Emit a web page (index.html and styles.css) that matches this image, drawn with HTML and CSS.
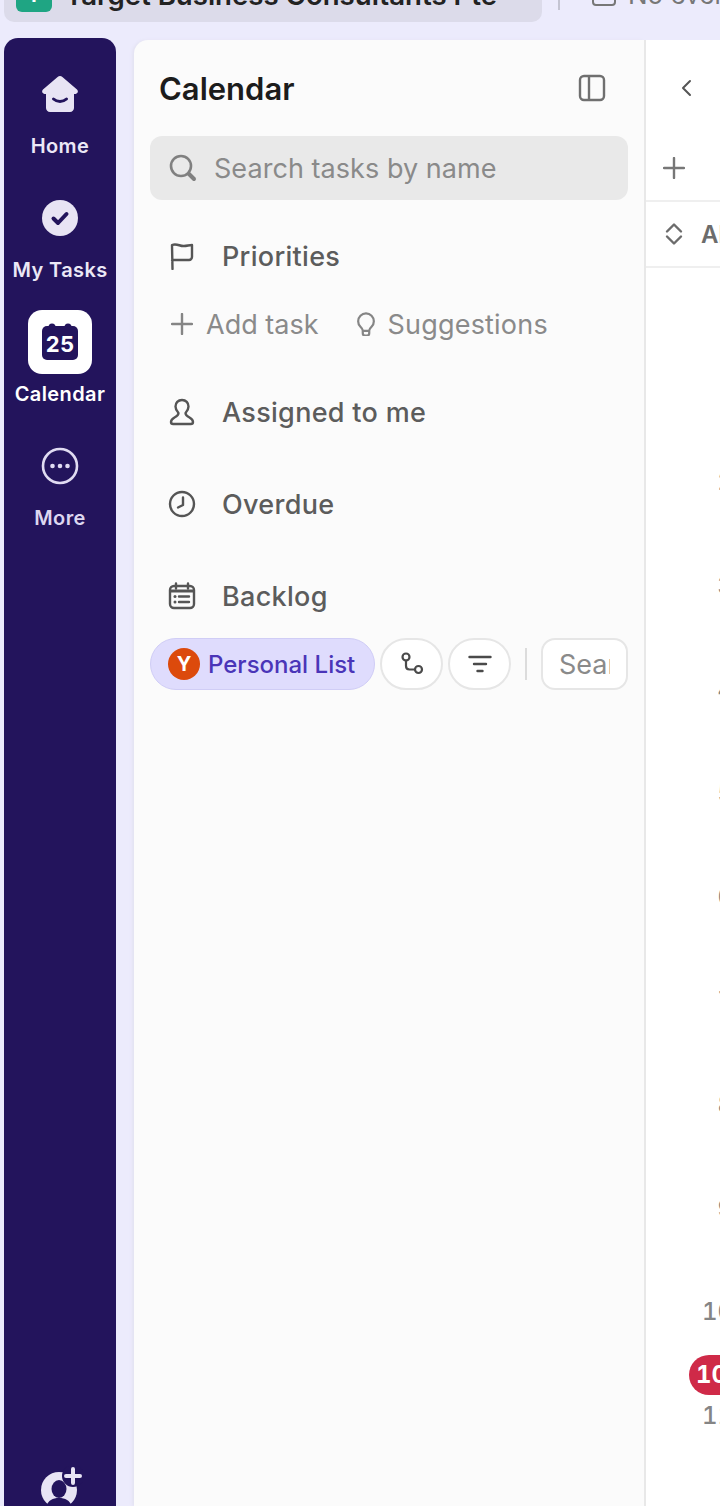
FILE: index.html
```html
<!DOCTYPE html>
<html lang="en">
<head>
    <meta charset="UTF-8">
    <title>Calendar</title>
    <link rel="stylesheet" href="styles.css">
</head>
<body>
    <div class="topbar">
        <div class="tab">
            <span class="tab-icon">T</span>
            <span class="tab-name">Target Business Consultants Pte</span>
        </div>
        <span class="top-divider"></span>
        <span class="event-icon"></span>
        <span class="event-text">No events</span>
    </div>

    <div class="app">
        <nav class="sidebar">
            <div class="nav-item">
                <div class="nav-icon">
                    <svg width="36" height="36" viewBox="0 0 36 36">
                        <path d="M15.6 1 1 13.4c-1.7 1.5-.8 4.3 1.400 4.600H4v14c0 2.200 1.800 4 4 4h20c2.200 0 4-1.800 4-4V18h1.600c2.200-.3 3.100-3.100 1.400-4.600L20.400 1c-1.400-1.200-3.400-1.200-4.800 0z" fill="#e8e4f4"/>
                        <path d="M11.500 23c3.500 3.200 9.500 3.200 13 0" fill="none" stroke="#23145c" stroke-width="3" stroke-linecap="round"/>
                    </svg>
                </div>
                <span>Home</span>
            </div>
            <div class="nav-item">
                <div class="nav-icon">
                    <svg width="36" height="36" viewBox="0 0 36 36">
                        <circle cx="18" cy="18" r="18" fill="#e8e4f4"/>
                        <path d="m11.500 18.500 4.500 4.500 8.500-9" fill="none" stroke="#23145c" stroke-width="4" stroke-linecap="round" stroke-linejoin="round"/>
                    </svg>
                </div>
                <span>My Tasks</span>
            </div>
            <div class="nav-item active">
                <div class="nav-icon">
                    <svg width="36" height="38" viewBox="0 0 36 38">
                        <circle cx="10" cy="4" r="3.500" fill="#23145c"/>
                        <circle cx="26" cy="4" r="3.500" fill="#23145c"/>
                        <rect x="0" y="3" width="36" height="34" rx="5" fill="#23145c"/>
                        <text x="18" y="29" class="cal-num" text-anchor="middle">25</text>
                    </svg>
                </div>
                <span>Calendar</span>
            </div>
            <div class="nav-item dim">
                <div class="nav-icon">
                    <svg width="38" height="38" viewBox="0 0 38 38">
                        <circle cx="19" cy="19" r="17" fill="none" stroke="#e0dbf2" stroke-width="2.600"/>
                        <circle cx="11.500" cy="19" r="2.300" fill="#e0dbf2"/>
                        <circle cx="19" cy="19" r="2.300" fill="#e0dbf2"/>
                        <circle cx="26.500" cy="19" r="2.300" fill="#e0dbf2"/>
                    </svg>
                </div>
                <span>More</span>
            </div>
            <div class="invite">
                <svg width="44" height="44" viewBox="0 0 44 44">
                    <circle cx="20" cy="24" r="18" fill="#e8e4f4"/>
                    <circle cx="34" cy="10" r="11" fill="#23145c"/>
                    <path d="M34 3v14M27 10h14" stroke="#e8e4f4" stroke-width="4" stroke-linecap="round"/>
                    <ellipse cx="20" cy="23" rx="7.500" ry="9" fill="#23145c"/>
                    <path d="M7 42c1-7 6-10 13-10s12 3 13 10z" fill="#23145c"/>
                </svg>
            </div>
        </nav>

        <aside class="panel">
            <div class="panel-head">
                <h2>Calendar</h2>
                <svg width="28" height="28" viewBox="0 0 28 28" fill="none" stroke="#6f6f6f" stroke-width="2.400">
                    <rect x="2" y="2" width="24" height="24" rx="4"/>
                    <path d="M11 2v24"/>
                </svg>
            </div>

            <div class="search">
                <svg width="30" height="30" viewBox="0 0 30 30" fill="none" stroke="#808080" stroke-width="2.600" stroke-linecap="round">
                    <circle cx="13" cy="13" r="10"/>
                    <path d="m21 21 5 5" stroke-width="4"/>
                </svg>
                <span>Search tasks by name</span>
            </div>

            <div class="task-row first">
                <svg width="28" height="28" viewBox="0 0 28 28" fill="none" stroke="#555" stroke-width="2.400" stroke-linecap="round" stroke-linejoin="round">
                    <path d="M4.500 27 4 3c5-2 8 1.500 12 1 3 0 5-1 8-1v12a3 3 0 0 1-3 3H4"/>
                </svg>
                <span>Priorities</span>
            </div>

            <div class="add-row">
                <span class="add-item">
                    <svg width="22" height="22" viewBox="0 0 22 22" stroke="#858585" stroke-width="2.400" stroke-linecap="round">
                        <path d="M11 1v20M1 11h20"/>
                    </svg>
                    Add task
                </span>
                <span class="add-item suggest">
                    <svg width="20" height="24" viewBox="0 -3 20 26" fill="none" stroke="#858585" stroke-width="2.400" stroke-linecap="round">
                        <path d="M6.500 17c0-1.500-1-2.500-2.500-4A8.500 8.500 0 1 1 16 13c-1.500 1.500-2.500 2.500-2.500 4v3a2.500 2.500 0 0 1-2.500 2.500H9A2.500 2.500 0 0 1 6.500 20z"/>
                        <path d="M7 17.500h6"/>
                    </svg>
                    Suggestions
                </span>
            </div>

            <div class="task-row">
                <svg width="26" height="28" viewBox="0 0 26 28" fill="none" stroke="#555" stroke-width="2.400" stroke-linejoin="round">
                    <path d="M13 2c-4 0-6.500 3-6.500 6.500 0 3 1.500 5 3 6.500 0 2-1 3-4 4.500C3 21 2 22.500 2 24c0 1.200 1 2 2.200 2h17.600c1.200 0 2.200-.8 2.200-2 0-1.500-1-3-3.500-4.500-3-1.500-4-2.500-4-4.500 1.500-1.500 3-3.500 3-6.500C19.500 5 17 2 13 2z"/>
                </svg>
                <span>Assigned to me</span>
            </div>
            <div class="task-row">
                <svg width="28" height="28" viewBox="0 0 28 28" fill="none" stroke="#555" stroke-width="2.400" stroke-linecap="round" stroke-linejoin="round">
                    <circle cx="14" cy="14" r="12"/>
                    <path d="M15 7.500V15l-5 2.500"/>
                </svg>
                <span>Overdue</span>
            </div>
            <div class="task-row">
                <svg width="28" height="28" viewBox="0 0 28 28">
                    <rect x="2" y="4" width="24" height="22" rx="4" fill="none" stroke="#555" stroke-width="2.400"/>
                    <path d="M2 9h24" stroke="#555" stroke-width="3"/>
                    <path d="M8 1.500v5M20 1.500v5" stroke="#555" stroke-width="2.400" stroke-linecap="round"/>
                    <path d="M11 14.500h10M11 20h10" stroke="#555" stroke-width="2.400" stroke-linecap="round"/>
                    <circle cx="7" cy="14.500" r="1.500" fill="#555"/>
                    <circle cx="7" cy="20" r="1.500" fill="#555"/>
                </svg>
                <span>Backlog</span>
            </div>

            <div class="chips">
                <div class="chip-list">
                    <span class="avatar">Y</span>
                    <span>Personal List</span>
                </div>
                <div class="chip-btn">
                    <svg width="24" height="24" viewBox="0 0 24 24" fill="none" stroke="#4a4a4a" stroke-width="2.200" stroke-linecap="round">
                        <circle cx="6" cy="5" r="3.500"/>
                        <circle cx="18.500" cy="17.500" r="3.500"/>
                        <path d="M6 8.500V14c0 2 1 3.500 3.500 3.500H15"/>
                    </svg>
                </div>
                <div class="chip-btn">
                    <svg width="24" height="18" viewBox="0 0 24 18" stroke="#4a4a4a" stroke-width="2.400" stroke-linecap="round">
                        <path d="M1.500 2h21M6 9h12M9.500 16h5"/>
                    </svg>
                </div>
                <span class="chip-divider"></span>
                <div class="chip-search"><span>Search</span></div>
            </div>
        </aside>

        <main class="main">
            <div class="bar bar-nav">
                <svg width="12" height="18" viewBox="0 0 12 18" fill="none" stroke="#555" stroke-width="2" stroke-linecap="round" stroke-linejoin="round">
                    <path d="M10 2 3 9l7 7"/>
                </svg>
            </div>
            <div class="bar bar-add">
                <svg width="22" height="22" viewBox="0 0 22 22" stroke="#777" stroke-width="2.400" stroke-linecap="round">
                    <path d="M11 1v20M1 11h20"/>
                </svg>
            </div>
            <div class="bar bar-all">
                <svg width="18" height="24" viewBox="0 0 18 24" fill="none" stroke="#6c6c6c" stroke-width="2.400" stroke-linecap="round" stroke-linejoin="round">
                    <path d="m2 9.500 7-7 7 7M2 14.500l7 7 7-7"/>
                </svg>
                <span>All day</span>
            </div>
            <div class="hours">
                <div class="hour">2</div>
                <div class="hour">3</div>
                <div class="hour">4</div>
                <div class="hour">5</div>
                <div class="hour">6</div>
                <div class="hour">7</div>
                <div class="hour">8</div>
                <div class="hour">9</div>
                <div class="hour">10</div>
                <div class="hour">11</div>
                <div class="now">10:36</div>
            </div>
        </main>
    </div>
</body>
</html>
```

FILE: styles.css
```css
html, body {
    height: 100%;
}
body {
    margin: 0;
    height: 1506px;
    overflow: hidden;
    background-color: #ecebfc;
    font-family: Inter, "Liberation Sans", sans-serif;
    display: flex;
    flex-direction: column;
}

/* top strip, cut by the top of the window */
.topbar {
    height: 22px;
    display: flex;
    align-items: flex-end;
    padding-left: 4px;
    flex-shrink: 0;
}
.tab {
    width: 538px;
    height: 22px;
    background-color: #dcdbea;
    border-radius: 0 0 10px 10px;
    display: flex;
    align-items: flex-end;
    overflow: hidden;
    box-sizing: border-box;
    padding: 0 0 10px 12px;
    gap: 13px;
    flex-shrink: 0;
}
.tab-icon {
    width: 36px;
    height: 30px;
    background-color: #1fa583;
    border-radius: 6px;
    flex-shrink: 0;
    color: #fff;
    font-size: 20px;
    font-weight: 700;
    line-height: 26px;
    text-align: center;
}
.tab-name {
    font-size: 27.6px;
    line-height: 22px;
    font-weight: 600;
    color: #222;
    white-space: nowrap;
    margin-bottom: 6px;
}
.top-divider {
    width: 2px;
    height: 32px;
    margin: 0 32px 12px 16px;
    background-color: #c4c4d2;
    flex-shrink: 0;
}
.event-icon {
    width: 20px;
    height: 20px;
    margin-bottom: 16px;
    border: 2px solid #777;
    border-radius: 4px;
    flex-shrink: 0;
}
.event-text {
    font-size: 26px;
    line-height: 22px;
    color: #777;
    white-space: nowrap;
    margin: 0 0 16px 12px;
}

.app {
    flex: 1;
    display: flex;
    min-height: 0;
    padding: 16px 0 0 4px;
}

/* left rail */
.sidebar {
    width: 112px;
    flex-shrink: 0;
    background-color: #23145c;
    border-radius: 14px 14px 0 0;
    padding-top: 24px;
    display: flex;
    flex-direction: column;
    align-items: center;
    box-sizing: border-box;
}
.nav-item {
    height: 124px;
    width: 100%;
    flex-shrink: 0;
    display: flex;
    flex-direction: column;
    align-items: center;
    color: #ebe8f6;
    font-size: 20px;
    font-weight: 600;
    letter-spacing: 0.4px;
    line-height: 24px;
}
.nav-icon {
    width: 64px;
    height: 64px;
    margin-bottom: 8px;
    border-radius: 14px;
    display: flex;
    align-items: center;
    justify-content: center;
}
.nav-item.active {
    color: #fff;
}
.nav-item.active .nav-icon {
    background-color: #fff;
}
.nav-item.dim {
    color: #dcd7f0;
}
.cal-num {
    font-family: Inter, "Liberation Sans", sans-serif;
    font-size: 22px;
    font-weight: 700;
    fill: #fff;
}
.invite {
    margin-top: auto;
    margin-bottom: -4px;
    height: 44px;
    margin-left: 2px;
}

/* calendar panel */
.panel {
    width: 510px;
    flex-shrink: 0;
    margin: 2px 0 0 18px;
    box-sizing: border-box;
    padding: 0 16px;
    background-color: #fbfbfb;
    border-radius: 14px 0 0 0;
    box-shadow: -2px 0 3px #e4e3f2;
}
.panel-head {
    height: 96px;
    display: flex;
    align-items: center;
    justify-content: space-between;
    padding: 0 22px 0 9px;
}
.panel-head h2 {
    margin: 0;
    font-size: 31px;
    font-weight: 600;
    color: #1c1c1c;
}
.search {
    height: 64px;
    display: flex;
    align-items: center;
    gap: 16px;
    padding-left: 18px;
    border-radius: 12px;
    background-color: #e9e9e9;
    color: #8a8a8a;
    font-size: 27px;
    letter-spacing: 0.05px;
}
.task-row {
    height: 84px;
    margin-top: 8px;
    display: flex;
    align-items: center;
    color: #5c5c5c;
    font-size: 27px;
    font-weight: 500;
    letter-spacing: 0.3px;
    padding-left: 18px;
}
.task-row svg {
    width: 28px;
    flex-shrink: 0;
    margin-right: 26px;
}
.task-row.first {
    margin-top: 14px;
}
.add-row {
    height: 44px;
    margin: 4px 0 24px;
    padding-left: 21px;
    display: flex;
    align-items: center;
    color: #8a8a8a;
    font-size: 27px;
}
.add-item {
    display: flex;
    align-items: center;
    gap: 13px;
}
.suggest {
    margin-left: 38px;
    gap: 11px;
    letter-spacing: 0.2px;
}

.chips {
    height: 52px;
    display: flex;
    align-items: center;
}
.chip-list {
    width: 225px;
    height: 52px;
    box-sizing: border-box;
    display: flex;
    align-items: center;
    gap: 8px;
    padding-left: 17px;
    border: 1px solid #d0cdf6;
    border-radius: 26px;
    background-color: #dfdcfd;
    color: #4a35b8;
    font-size: 24px;
    font-weight: 500;
    flex-shrink: 0;
}
.avatar {
    width: 32px;
    height: 32px;
    border-radius: 50%;
    background-color: #dc4a0c;
    color: #fff;
    font-size: 20px;
    font-weight: 700;
    display: flex;
    align-items: center;
    justify-content: center;
}
.chip-btn {
    width: 63px;
    height: 52px;
    margin-left: 5px;
    box-sizing: border-box;
    border: 2px solid #e6e6e6;
    border-radius: 26px;
    background-color: #fff;
    display: flex;
    align-items: center;
    justify-content: center;
    flex-shrink: 0;
}
.chip-divider {
    width: 2px;
    height: 32px;
    margin: 0 14px;
    background-color: #dcdcdc;
    flex-shrink: 0;
}
.chip-search {
    width: 87px;
    height: 52px;
    box-sizing: border-box;
    border: 2px solid #e6e6e6;
    border-radius: 14px;
    background-color: #fff;
    padding: 0 16px;
    display: flex;
    align-items: center;
    color: #8a8a8a;
    font-size: 27px;
    flex-shrink: 0;
}
.chip-search span {
    display: block;
    overflow: hidden;
    white-space: nowrap;
}

/* day view, mostly off the right edge */
.main {
    flex: 1;
    margin-top: 2px;
    box-sizing: border-box;
    border-left: 2px solid #e8e8e8;
    background-color: #fff;
    color: #777;
    min-width: 0;
    overflow: hidden;
}
.bar {
    display: flex;
    align-items: center;
}
.bar svg {
    flex-shrink: 0;
}
.bar-nav {
    height: 96px;
    padding-left: 34px;
}
.bar-add {
    height: 64px;
    padding-left: 17px;
    border-bottom: 2px solid #efefef;
}
.bar-all {
    height: 64px;
    padding-left: 19px;
    gap: 18px;
    border-bottom: 2px solid #efefef;
    font-size: 24px;
    font-weight: 600;
    color: #6c6c6c;
    white-space: nowrap;
}
.hours {
    position: relative;
    padding-top: 162px;
    font-variant-numeric: tabular-nums;
}
.hour {
    width: 87px;
    height: 103.75px;
    display: flex;
    align-items: center;
    justify-content: flex-end;
    font-size: 24px;
    font-weight: 500;
    color: #858585;
}
.now {
    position: absolute;
    left: 43px;
    top: 1087px;
    width: 80px;
    height: 40px;
    padding-left: 7px;
    box-sizing: border-box;
    border-radius: 20px;
    background-color: #cf2a48;
    color: #fff;
    font-size: 24px;
    font-weight: 700;
    line-height: 40px;
    white-space: nowrap;
}
```
